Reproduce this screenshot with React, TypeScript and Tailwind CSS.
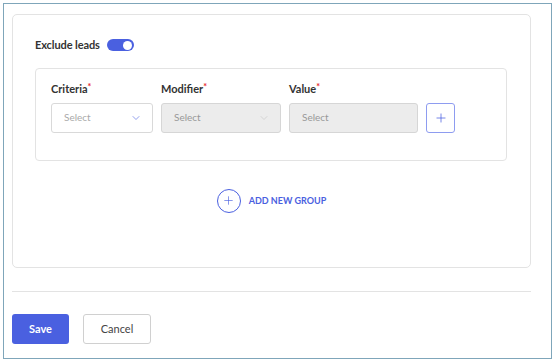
import { ChevronDown, Plus } from "lucide-react"

const fields = [
  { label: "Criteria", width: "w-[102px]", disabled: false, chevron: true },
  { label: "Modifier", width: "w-[120px]", disabled: true, chevron: true },
  { label: "Value", width: "w-[129px]", disabled: true, chevron: false },
]

export default function App() {
  return (
    <div className="h-[362px] w-[556px] bg-white pl-[3px] pt-[3px] font-['Lato','Open_Sans',sans-serif]">
      <div className="flex h-[356px] w-[549px] flex-col border border-[#7fa6ba] pl-[8px] pt-[10px]">
        <div className="h-[254px] w-[519px] rounded-[5px] border border-[#e3e3e3] px-[22px] pt-[22px]">
          <div className="flex items-center gap-[7px]">
            <span className="text-[11px] font-bold tracking-[-0.1px] text-[#333]">Exclude leads</span>
            <div className="flex h-[12px] w-[27px] items-center justify-end rounded-full bg-[#4a60e0] pr-[2px]">
              <div className="h-[9px] w-[9px] rounded-full bg-white" />
            </div>
          </div>
          <div className="mt-[14px] h-[93px] w-[472px] rounded-[4px] border border-[#e3e3e3] px-[15px] pt-[13px]">
            <div className="flex items-end gap-[8px]">
              {fields.map((f) => (
                <div key={f.label} className={`flex flex-col ${f.width}`}>
                  <span className="mb-[6px] text-[11px] font-bold leading-[14px] text-[#333]">
                    {f.label}
                    <span className="relative top-[-3px] text-[9px] font-bold text-[#e8282b]">*</span>
                  </span>
                  <div
                    className={`flex h-[30px] items-center justify-between rounded-[3px] border pl-[12px] pr-[10px] text-[10px] ${
                      f.disabled ? "border-[#d6d6d6] bg-[#ececec] text-[#999]" : "border-[#d9d9d9] bg-white text-[#aaa]"
                    }`}
                  >
                    <span>Select</span>
                    {f.chevron && (
                      <ChevronDown
                        size={12}
                        strokeWidth={1.2}
                        className={f.disabled ? "text-[#c4c4c4]" : "text-[#4a60e0]"}
                      />
                    )}
                  </div>
                </div>
              ))}
              <div className="flex h-[30px] w-[29px] items-center justify-center rounded-[3px] border border-[#8e9cf0] bg-white">
                <Plus size={14} strokeWidth={1.3} className="text-[#4a60e0]" />
              </div>
            </div>
          </div>
          <div className="mt-[28px] flex items-center justify-center gap-[8px]">
            <div className="flex h-[24px] w-[24px] items-center justify-center rounded-full border border-[#4a60e0]">
              <Plus size={13} strokeWidth={1.2} className="text-[#4a60e0]" />
            </div>
            <span className="text-[9px] font-bold text-[#4a60e0]">ADD NEW GROUP</span>
          </div>
        </div>
        <div className="mt-[23px] h-px w-[519px] bg-[#e3e3e3]" />
        <div className="mt-[22px] flex gap-[14px]">
          <button className="h-[30px] w-[57px] rounded-[3px] bg-[#4a60e0] text-[11px] font-bold text-white">
            Save
          </button>
          <button className="h-[30px] w-[68px] rounded-[3px] border border-[#d0d0d0] bg-white text-[11px] text-[#444]">
            Cancel
          </button>
        </div>
      </div>
    </div>
  )
}
